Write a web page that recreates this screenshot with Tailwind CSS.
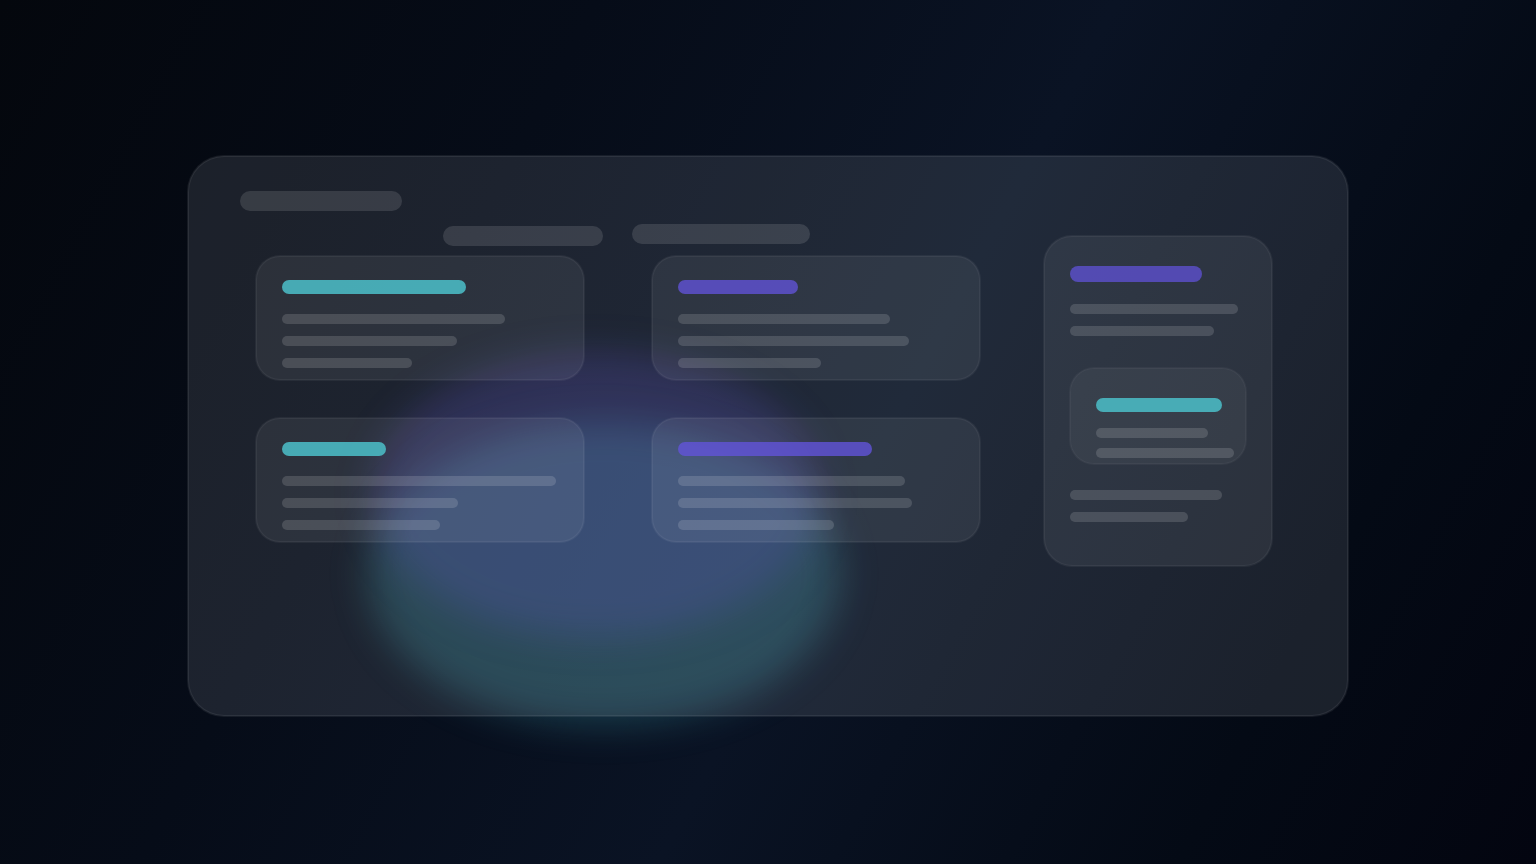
<!DOCTYPE html>
<html lang="en">

<head>
  <meta charset="UTF-8" />
  <meta name="viewport" content="width=device-width, initial-scale=1.0" />
  <title>Glass Dashboard</title>
  <script src="https://cdn.jsdelivr.net/npm/@tailwindcss/browser@4"></script>
</head>

<body class="bg-[#02040c]">
  <div class="relative min-h-screen overflow-hidden flex items-center justify-center px-8 pt-2 bg-[linear-gradient(118deg,#04070d_0%,#060c18_30%,#0a1324_56%,#040a15_82%,#030510_100%)]">

    <!-- Glow -->
    <div class="absolute left-[368px] top-[422px] w-[472px] h-[304px] rounded-[50%] bg-[#3fa7b5]/27 blur-[18px]"></div>
    <div class="absolute left-[372px] top-[352px] w-[448px] h-[286px] rounded-[50%] bg-[#5848c8]/24 blur-[18px]"></div>

    <!-- Panel -->
    <main class="relative w-full max-w-[1160px] rounded-[36px] border border-white/7 ring-1 ring-white/7 bg-[#f0f5ff]/10 px-[51px] pt-[34px] pb-[149px]">
      <div class="flex items-start">
        <div class="flex-1">
          <!-- Header -->
          <div class="h-5 w-[162px] rounded-full bg-white/12"></div>
          <div class="flex items-start pt-[13px] pl-[203px]">
            <div class="mt-[2px] h-5 w-[160px] rounded-full bg-white/12"></div>
            <div class="ml-[29px] h-5 w-[178px] rounded-full bg-white/12"></div>
          </div>

          <!-- Cards -->
          <div class="grid grid-cols-2 gap-x-[68px] gap-y-[38px] pt-[10px] pl-4">
            <section class="h-[124px] rounded-3xl border border-white/5 ring-1 ring-white/5 bg-white/7 px-[25px] pt-[23px]">
              <div class="h-[14px] w-[184px] rounded-full bg-[#4ab8c2]/90"></div>
              <div class="mt-5 space-y-3">
                <div class="h-[10px] w-[223px] rounded-full bg-white/14"></div>
                <div class="h-[10px] w-[175px] rounded-full bg-white/14"></div>
                <div class="h-[10px] w-[130px] rounded-full bg-white/14"></div>
              </div>
            </section>
            <section class="h-[124px] rounded-3xl border border-white/5 ring-1 ring-white/5 bg-white/7 px-[25px] pt-[23px]">
              <div class="h-[14px] w-[120px] rounded-full bg-[#6052d6]/80"></div>
              <div class="mt-5 space-y-3">
                <div class="h-[10px] w-[212px] rounded-full bg-white/14"></div>
                <div class="h-[10px] w-[231px] rounded-full bg-white/14"></div>
                <div class="h-[10px] w-[143px] rounded-full bg-white/14"></div>
              </div>
            </section>
            <section class="h-[124px] rounded-3xl border border-white/5 ring-1 ring-white/5 bg-white/7 px-[25px] pt-[23px]">
              <div class="h-[14px] w-[104px] rounded-full bg-[#4ab8c2]/90"></div>
              <div class="mt-5 space-y-3">
                <div class="h-[10px] w-[274px] rounded-full bg-white/14"></div>
                <div class="h-[10px] w-[176px] rounded-full bg-white/14"></div>
                <div class="h-[10px] w-[158px] rounded-full bg-white/14"></div>
              </div>
            </section>
            <section class="h-[124px] rounded-3xl border border-white/5 ring-1 ring-white/5 bg-white/7 px-[25px] pt-[23px]">
              <div class="h-[14px] w-[194px] rounded-full bg-[#6254da]/80"></div>
              <div class="mt-5 space-y-3">
                <div class="h-[10px] w-[227px] rounded-full bg-white/14"></div>
                <div class="h-[10px] w-[234px] rounded-full bg-white/14"></div>
                <div class="h-[10px] w-[156px] rounded-full bg-white/14"></div>
              </div>
            </section>
          </div>
        </div>

        <!-- Side card -->
        <aside class="mt-[45px] ml-16 mr-6 w-[228px] rounded-[28px] border border-white/5 ring-1 ring-white/5 bg-white/7 px-[25px] pt-[29px] pb-[43px]">
          <div class="h-4 w-[132px] rounded-full bg-[#5c50ce]/80"></div>
          <div class="mt-[22px] space-y-3">
            <div class="h-[10px] w-[168px] rounded-full bg-white/14"></div>
            <div class="h-[10px] w-[144px] rounded-full bg-white/14"></div>
          </div>
          <div class="mt-8 h-24 rounded-3xl border border-white/4 ring-1 ring-white/4 bg-white/5 pl-[25px] pt-[29px]">
            <div class="h-[14px] w-[126px] rounded-full bg-[#4ab8c2]/90"></div>
            <div class="mt-4 space-y-[10px]">
              <div class="h-[10px] w-[112px] rounded-full bg-white/14"></div>
              <div class="h-[10px] w-[138px] rounded-full bg-white/14"></div>
            </div>
          </div>
          <div class="mt-[26px] space-y-3">
            <div class="h-[10px] w-[152px] rounded-full bg-white/14"></div>
            <div class="h-[10px] w-[118px] rounded-full bg-white/14"></div>
          </div>
        </aside>
      </div>
    </main>
  </div>
</body>

</html>
